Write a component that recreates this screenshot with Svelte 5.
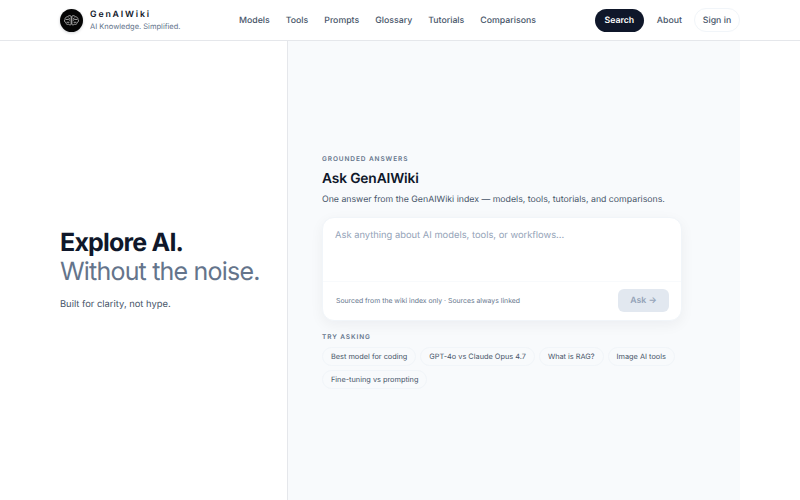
<script>
  const navLinks = ['Models', 'Tools', 'Prompts', 'Glossary', 'Tutorials', 'Comparisons'];
  const suggestions = [
    'Best model for coding',
    'GPT-4o vs Claude Opus 4.7',
    'What is RAG?',
    'Image AI tools',
    'Fine-tuning vs prompting'
  ];
</script>

<header class="topbar">
  <div class="topbar-inner">
    <a class="brand" href="#home">
      <span class="logo">
        <svg width="17" height="17" viewBox="0 0 24 24" fill="none" stroke="#bdbdbd" stroke-width="1.200">
          <path d="M11.500 6c-1.500-1.400-4.300-1-5 .8C4 7 2.500 8.500 3 10.300 1.600 11.500 1.800 14 3.800 14.800c0 1.900 2.300 3.200 4.300 2.500 1 1.100 2.600 1.100 3.400.2z" />
          <path d="M12.500 6c1.500-1.400 4.300-1 5 .8 2.500.2 4 1.700 3.500 3.500 1.400 1.200 1.200 3.700-.8 4.500 0 1.900-2.300 3.200-4.300 2.500-1 1.100-2.600 1.100-3.400.2z" />
          <path d="M4 10.500h4l2 1.500M20 10.500h-4l-2 1.500M5 14.500h4M19 14.500h-4M8 8l1.500 2M16 8l-1.500 2" />
        </svg>
      </span>
      <span class="brand-text">
        <span class="brand-name">GenAIWiki</span>
        <span class="brand-tag">AI Knowledge. Simplified.</span>
      </span>
    </a>

    <nav class="nav">
      {#each navLinks as link}
        <a href="#{link.toLowerCase()}">{link}</a>
      {/each}
    </nav>

    <div class="actions">
      <button class="search-btn">Search</button>
      <a class="about" href="#about">About</a>
      <button class="signin-btn">Sign in</button>
    </div>
  </div>
</header>

<main class="layout">
  <section class="hero">
    <h1>Explore AI.<span>Without the noise.</span></h1>
    <p>Built for clarity, not hype.</p>
  </section>

  <section class="ask">
    <div class="eyebrow">Grounded answers</div>
    <h2>Ask GenAIWiki</h2>
    <p class="lead">One answer from the GenAIWiki index — models, tools, tutorials, and comparisons.</p>

    <div class="card">
      <textarea placeholder="Ask anything about AI models, tools, or workflows..."></textarea>
      <div class="card-foot">
        <span>Sourced from the wiki index only · Sources always linked</span>
        <button class="ask-btn" disabled>Ask →</button>
      </div>
    </div>

    <div class="try-label">Try asking</div>
    <div class="chips">
      {#each suggestions as s}
        <button class="chip">{s}</button>
      {/each}
    </div>
  </section>
</main>

<style>
  :global(body) {
    font-family: Inter, "Liberation Sans", sans-serif;
    background: #fff;
    color: #0f172a;
    text-rendering: geometricPrecision;
  }

  .topbar {
    height: 40px;
    border-bottom: 1px solid #e5e7eb;
  }

  .topbar-inner {
    width: 680px;
    height: 100%;
    margin: 0 auto;
    display: flex;
    align-items: center;
  }

  .brand {
    display: flex;
    align-items: center;
    gap: 7px;
    text-decoration: none;
    width: 179px;
  }

  .logo {
    width: 23px;
    height: 23px;
    border-radius: 50%;
    background: #050505;
    display: flex;
    align-items: center;
    justify-content: center;
    box-shadow: 0 1px 3px rgba(15, 23, 42, 0.2);
  }

  .brand-text {
    display: flex;
    flex-direction: column;
    padding-top: 2px;
  }

  .brand-name {
    font-size: 8.750px;
    line-height: 11px;
    font-weight: 600;
    letter-spacing: 0.21em;
    color: #0f172a;
  }

  .brand-tag {
    font-size: 7.500px;
    line-height: 11px;
    color: #64748b;
  }

  .nav {
    display: flex;
    gap: 16px;
    padding-top: 2px;
  }

  .nav a {
    font-size: 8.750px;
    font-weight: 500;
    color: #475569;
    text-decoration: none;
  }

  .actions {
    margin-left: auto;
    display: flex;
    align-items: center;
  }

  button {
    font-family: inherit;
    text-rendering: geometricPrecision;
  }

  .search-btn {
    width: 49px;
    height: 23px;
    padding: 1px 0 0;
    border: none;
    border-radius: 12px;
    background: #0f172a;
    color: #fff;
    font-size: 8.750px;
    font-weight: 600;
  }

  .about {
    margin-left: 13px;
    padding-top: 2px;
    font-size: 8.750px;
    font-weight: 500;
    color: #475569;
    text-decoration: none;
  }

  .signin-btn {
    margin-left: 12px;
    width: 46px;
    height: 24px;
    padding: 1px 0 0;
    border: 1px solid #f1f5f9;
    border-radius: 12px;
    background: #fff;
    color: #475569;
    font-size: 8.750px;
    font-weight: 500;
  }

  .layout {
    width: 680px;
    height: 459px;
    margin: 0 auto;
    display: flex;
  }

  .hero {
    width: 227px;
    flex-shrink: 0;
    display: flex;
    flex-direction: column;
    justify-content: center;
  }

  h1 {
    margin: 1px 0 0;
    font-size: 25px;
    line-height: 29px;
    font-weight: 700;
    letter-spacing: -0.032em;
    color: #0f172a;
  }

  h1 span {
    display: block;
    font-weight: 400;
    color: #64748b;
  }

  .hero p {
    margin: 10px 0 0;
    font-size: 9.375px;
    line-height: 16px;
    color: #475569;
  }

  .ask {
    flex: 1;
    min-width: 0;
    border-left: 1px solid #e5e7eb;
    background: #f8fafc;
    padding: 1px 58px 0 34px;
    display: flex;
    flex-direction: column;
    justify-content: center;
  }

  .eyebrow,
  .try-label {
    font-size: 6.500px;
    line-height: 10px;
    font-weight: 600;
    letter-spacing: 0.14em;
    text-transform: uppercase;
    color: #64748b;
  }

  h2 {
    margin: 5px 0 0;
    font-size: 13.750px;
    line-height: 20px;
    font-weight: 600;
    letter-spacing: -0.01em;
    color: #0f172a;
  }

  .lead {
    margin: 4px 0 0;
    font-size: 8.750px;
    line-height: 15px;
    color: #475569;
    white-space: nowrap;
  }

  .card {
    margin-top: 9px;
    height: 104px;
    box-sizing: border-box;
    border: 1px solid #f1f5f9;
    border-radius: 12px;
    background: #fff;
    box-shadow: 0 4px 14px rgba(15, 23, 42, 0.05);
    display: flex;
    flex-direction: column;
  }

  textarea {
    flex: 1;
    min-height: 0;
    padding: 10px 12px;
    border: none;
    outline: none;
    resize: none;
    background: none;
    font-family: inherit;
    font-size: 9.375px;
    line-height: 15px;
    color: #0f172a;
    text-rendering: geometricPrecision;
  }

  textarea::placeholder {
    color: #94a3b8;
    opacity: 1;
  }

  .card-foot {
    height: 38px;
    padding: 0 12px 0 13px;
    border-top: 1px solid #f8fafc;
    display: flex;
    align-items: center;
    justify-content: space-between;
    font-size: 6.875px;
    color: #64748b;
  }

  .ask-btn {
    width: 51px;
    height: 23px;
    padding: 0;
    border: none;
    border-radius: 6px;
    background: #e2e8f0;
    color: #94a3b8;
    font-size: 8.750px;
    font-weight: 600;
  }

  .try-label {
    margin-top: 11px;
  }

  .chips {
    margin-top: 5px;
    display: flex;
    flex-wrap: wrap;
    gap: 4px;
  }

  .chip {
    height: 19px;
    padding: 0 8px;
    border: 1px solid #f1f5f9;
    border-radius: 10px;
    background: #fff0;
    color: #475569;
    font-size: 7.350px;
    white-space: nowrap;
  }
</style>
